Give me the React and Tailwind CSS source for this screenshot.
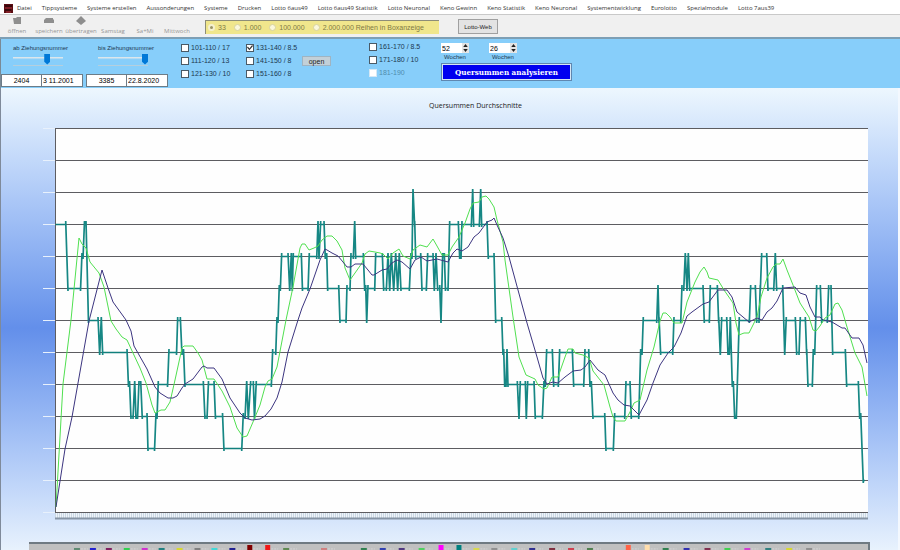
import { useState } from 'react'

const menu = [
  'Datei',
  'Tippsysteme',
  'Systeme erstellen',
  'Aussonderungen',
  'Systeme',
  'Drucken',
  'Lotto 6aus49',
  'Lotto 6aus49 Statistik',
  'Lotto Neuronal',
  'Keno Gewinn',
  'Keno Statistik',
  'Keno Neuronal',
  'Systementwicklung',
  'Eurolotto',
  'Spezialmodule',
  'Lotto 7aus39',
]

const toolbar = [
  { label: 'öffnen', icon: 'M1 2h3l1-1h4v7H2z' },
  { label: 'speichern', icon: 'M1 3l1-1h7v1l1 1v3H0V4z' },
  { label: 'übertragen', icon: 'M5 0l5 5-5 4-5-4z' },
  { label: 'Samstag' },
  { label: 'Sa+Mi' },
  { label: 'Mittwoch' },
]

const rows = ['33', '1.000', '100.000', '2.000.000 Reihen in Boxanzeige']

// [x, grid line], grid line 0 is the top of the plot
const steps = [
  [55.5, 3], [65.7, 3], [68, 5], [80.5, 5], [82, 4], [83, 4], [84.5, 3], [86, 3], [88.5, 6], [98, 6],
  [99.7, 7], [101.3, 6], [102.7, 7], [127, 7], [128.5, 8], [129.5, 8], [131, 9], [133, 9], [134.7, 8],
  [136, 9], [137.5, 9], [139, 8], [140.7, 8], [142.3, 9], [147, 9], [148, 10], [154.5, 10], [156, 9],
  [157, 9], [158.3, 8], [167.5, 8], [169, 7], [176.5, 7], [177.7, 6], [180.3, 6], [182, 7], [183.5, 7],
  [185, 8], [203.3, 8], [205, 9], [207, 9], [208.5, 8], [214, 8], [215.5, 9], [222.5, 9], [224, 10],
  [241.7, 10], [243.3, 9], [245, 9], [246.7, 8], [248.3, 9], [250.7, 8], [253.3, 8], [254.5, 9],
  [256.3, 8], [271.3, 8], [272.7, 7], [275.7, 7], [277, 6], [278, 6], [279.3, 5], [280.3, 5], [281.7, 4],
  [288, 4], [289.7, 5], [291.3, 4], [292.3, 5], [293.3, 4], [301.3, 4], [302.5, 5], [308, 5], [309.3, 4],
  [316.7, 4], [318, 3], [319, 4], [320.7, 3], [324, 3], [325.3, 4], [326.7, 4], [327.7, 5], [338.7, 5],
  [340, 6], [346, 6], [347, 5], [350, 5], [351, 4], [353.3, 4], [354.7, 3], [355.7, 4], [363.3, 4],
  [364.7, 5], [365.7, 5], [366.7, 6], [368, 5], [374.7, 5], [375.7, 4], [382.3, 4], [383.7, 5],
  [386.3, 5], [388, 4], [389.7, 5], [391.3, 4], [393.7, 5], [395.7, 4], [397.7, 5], [399.3, 4], [401, 5],
  [409.3, 5], [411, 4], [412, 4], [413, 2], [414.7, 3], [415.7, 4], [420.7, 4], [422, 5], [426.3, 5],
  [427.7, 4], [433, 4], [434.3, 5], [436, 4], [437.7, 5], [439.7, 5], [441, 6], [442.7, 4], [444.3, 4],
  [445.5, 5], [448, 5], [449.7, 3], [458.3, 3], [459.7, 4], [461, 4], [462, 3], [471.3, 3], [472.7, 2],
  [473.7, 3], [479.3, 3], [480.7, 2], [481.7, 3], [487, 3], [488.3, 4], [494, 4], [495.7, 6], [501.7, 6],
  [503, 7], [503.7, 7], [504.7, 8], [506, 8], [507, 7], [508, 8], [517.3, 8], [519, 9], [520.3, 8],
  [525.3, 8], [526.3, 9], [527.7, 8], [534, 8], [535.3, 9], [542.3, 9], [544, 8], [545.3, 8], [546.7, 7],
  [552.3, 7], [553.7, 8], [558.3, 8], [559.7, 7], [572.3, 7], [573.7, 8], [583.7, 8], [585, 7],
  [588.7, 7], [590, 8], [591.3, 8], [593, 9], [604.7, 9], [606, 10], [613.3, 10], [614.7, 9], [624.7, 9],
  [626, 8], [630, 8], [631.3, 9], [638.7, 9], [640.7, 7], [642, 7], [643.3, 6], [656.7, 6], [658, 5],
  [659, 6], [660.7, 7], [672.7, 7], [674, 6], [680.7, 6], [682, 5], [683.7, 5], [685.3, 4], [687, 5],
  [688.3, 4], [689.7, 5], [703, 5], [704.3, 6], [709.3, 6], [710.3, 5], [717.3, 5], [718.7, 6],
  [720.3, 7], [721.7, 6], [726.7, 6], [728, 7], [729.3, 7], [730.3, 6], [732.3, 8], [733.3, 8],
  [734.7, 9], [736.3, 9], [739.3, 6], [749.3, 6], [750.7, 5], [755.3, 5], [756.7, 6], [759, 6],
  [760.3, 5], [761.7, 4], [766.7, 4], [768, 5], [773.7, 5], [775.3, 4], [776.7, 5], [782.7, 5],
  [784.7, 7], [786.3, 6], [795.3, 6], [796.7, 7], [799, 7], [800.3, 6], [805.3, 6], [806.7, 7], [808, 8],
  [812.3, 8], [813.3, 7], [814.7, 7], [816.7, 5], [820.3, 5], [821.7, 6], [827.3, 6], [828.7, 5],
  [831, 5], [832.7, 7], [845.3, 7], [846.7, 8], [858.3, 8], [859.7, 9], [860.7, 9], [863.3, 11],
  [865, 11],
]

const average26 =
  '56,507 63,384 71,320 79,238 82,244 86,248 90,262 99,273 104,287 111,321 116,329 122,337 127,340 133,353 140,368 146,383 152,405 155,413 161,410 165,410 170,402 175,380 182,348 184,346 193,346 198,353 202,360 207,379 214,379 222,391 230,407 237,428 243,437 247,436 253,422 260,405 265,387 268,381 272,379 277,367 286,320 293,287 300,248 302,244 305,244 309,250 314,248 318,246 322,240 327,236 332,236 337,241 342,250 345,268 350,280 355,273 362,263 365,254 369,251 375,252 380,253 383,254 388,259 393,253 399,249 403,256 410,259 413,250 420,245 427,247 433,239 437,246 442,255 448,255 452,247 459,237 465,223 470,209 473,203 479,202 482,197 486,196 489,199 494,207 497,220 503,242 505,260 513,317 519,357 526,375 535,379 538,385 544,389 547,388 552,377 558,377 565,357 568,349 573,349 575,353 583,355 589,358 593,371 604,385 610,407 613,417 616,421 625,421 630,412 634,403 640,400 647,370 654,347 660,321 663,313 666,313 670,317 674,323 682,323 687,302 695,282 700,272 704,267 707,272 709,278 718,280 724,290 733,303 736,323 739,335 744,333 749,333 752,327 757,317 761,297 767,278 773,267 776,264 780,264 783,259 787,270 793,285 800,303 809,317 813,330 816,331 820,326 825,318 830,315 835,304 838,303 842,310 847,327 855,353 862,367 867,396'

const average52 =
  '56,507 65,449 72,417 89,321 102,270 108,288 113,302 126,320 131,331 134,346 147,369 155,387 160,393 168,398 173,398 177,396 182,388 185,384 193,379 202,367 204,366 207,368 214,368 222,379 230,398 240,413 245,418 252,420 260,419 265,416 271,409 277,398 282,382 288,352 298,320 302,308 310,289 320,260 325,249 327,250 332,253 338,256 343,262 347,267 351,267 355,264 363,264 368,270 372,275 374,275 382,270 387,269 392,263 397,260 402,262 410,269 415,260 421,257 427,261 437,259 448,262 453,253 457,249 462,251 468,247 474,237 479,233 487,222 492,220 494,218 497,225 503,238 509,257 518,290 527,323 537,357 543,378 547,384 553,382 558,383 565,377 573,371 581,370 585,367 590,360 598,370 605,375 613,393 618,400 624,405 630,406 639,415 647,400 653,383 660,365 668,353 674,347 681,333 687,316 692,312 703,304 709,302 718,290 727,290 732,297 737,312 743,317 749,322 757,318 762,320 767,312 772,308 777,301 783,288 795,287 800,293 806,295 810,307 815,317 820,317 823,320 832,322 842,328 845,328 852,338 859,338 863,345 867,363'

const legend = [
  [76, '#5f8a72'], [92, '#2020d0'], [108, '#802060'], [126, '#30d050'], [144, '#d030d0'],
  [161, '#208080'], [179, '#d8d830'], [197, '#808080'], [214, '#40d8d8'], [232, '#202090'],
  [249, '#800000', 1], [267, '#f01818', 1], [286, '#5f8a52'], [324, '#d08080'], [364, '#308050'],
  [383, '#3040b0'], [402, '#503880'], [422, '#50d060'], [441, '#ff00ff', 1], [459, '#008080', 1],
  [477, '#d8d850'], [495, '#909090'], [515, '#60d0d0'], [533, '#303090'], [553, '#803040'],
  [572, '#d04050'], [591, '#508050'], [629, '#ff6347', 1], [648, '#ffdead', 1], [667, '#308050'],
  [688, '#3030b0'], [709, '#803050'], [729, '#40d050'], [749, '#d040d0'], [770, '#308080'],
  [791, '#d8d830'], [811, '#909090'],
]

const gridY = (line) => 128 + line * 32

// a riser runs a little past both of its grid lines
function riser([x1, a], [x2, b]) {
  const over = b > a ? 3 : -3
  return `M${x1} ${gridY(a) - over}L${x2} ${gridY(b) + over}`
}

const flats = steps.slice(1).map((p, i) => (p[1] === steps[i][1] ? `M${steps[i][0]} ${gridY(p[1])}.5H${p[0]}` : '')).join('')
const risers = steps.slice(1).map((p, i) => (p[1] === steps[i][1] ? '' : riser(steps[i], p))).join('')

function Plot() {
  return (
    <svg viewBox="40 124 832 398" className="block w-full h-auto" role="img" aria-label="Quersummen Durchschnitte">
      <rect x="55" y="128" width="813" height="385" fill="#fefefe" />
      {Array.from({ length: 13 }, (_, i) => (
        <g key={i} shapeRendering="crispEdges">
          <path d={`M43 ${gridY(i)}.5h12`} stroke="#e8f1fc" />
          <path d={`M55 ${gridY(i)}.5h813`} stroke="#5d5d61" />
        </g>
      ))}
      <path d="M55.5 128v385" stroke="#5d5d61" />
      <path d="M55 515.5h813" stroke="#eef4fa" strokeWidth="5" />
      <path d="M55 515.5h813" stroke="#cbd8e4" strokeWidth="5" strokeDasharray="1 1" />
      <path d="M55 518.5h813" stroke="#8795a6" strokeWidth="2" />
      <g fill="none">
        <path d={flats} stroke="#117f7c" strokeWidth="1.4" />
        <path d={risers} stroke="#168784" strokeWidth="1.7" />
        <polyline points={average26} stroke="#50e050" />
        <polyline points={average52} stroke="#3c3580" />
      </g>
    </svg>
  )
}

function Legend() {
  return (
    <div className="mt-5 mx-7 border-t-2 border-r-2 border-[#6f7a82] bg-[#c0c0c0]">
      <svg viewBox="28 544 842 12" className="block w-full h-auto">
        {legend.map(([x, color, block]) => (
          <rect
            key={x}
            x={block ? x - 2 : x - 3}
            y={block ? 545 : 548}
            width={block ? 5 : 6}
            height={block ? 8 : 2}
            fill={color}
          />
        ))}
        {legend.map(([x]) => (
          <path key={x} d={`M${x + 4} 549h7`} stroke="#d4d4d4" strokeDasharray="2 1" />
        ))}
      </svg>
    </div>
  )
}

function DrawRange({ id, label, value, onChange, no, date }) {
  return (
    <div className="flex w-[82px] flex-col">
      <label htmlFor={id} className="pl-3 pt-1 text-[6px] leading-[10px] whitespace-nowrap">
        {label}
      </label>
      <input
        id={id}
        type="range"
        min="1"
        max="3385"
        value={value}
        onChange={(e) => onChange(+e.target.value)}
        className="ml-3 h-3 w-[50px] appearance-none bg-transparent bg-linear-to-b from-transparent from-35% via-[#e7eaea] via-35% to-transparent to-55% [&::-webkit-slider-thumb]:h-[11px] [&::-webkit-slider-thumb]:w-[6px] [&::-webkit-slider-thumb]:appearance-none [&::-webkit-slider-thumb]:bg-[#0078d7] [&::-webkit-slider-thumb]:[clip-path:polygon(0_0,100%_0,100%_75%,50%_100%,0_75%)]"
      />
      <div className="ml-3 h-px w-[50px] bg-[#b5cfdd]" />
      <div className="mt-2 flex border border-[#6d7c87] bg-white text-black">
        <input aria-label={`${label} Nummer`} defaultValue={no} className="h-[11px] w-10 border-r border-[#6d7c87] text-center" />
        <input aria-label={`${label} Datum`} defaultValue={date} className="h-[11px] min-w-0 flex-1 pl-px" />
      </div>
    </div>
  )
}

function Check({ label, ...props }) {
  return (
    <label className="flex h-[13px] items-center gap-[2px] whitespace-nowrap has-disabled:text-[#4f8cad]">
      <input
        type="checkbox"
        className="size-[8px] appearance-none border border-[#4a5a66] bg-white disabled:border-[#d5e8f5] checked:before:block checked:before:size-full checked:before:bg-[#333] checked:before:[clip-path:polygon(0_50%,15%_35%,40%_65%,85%_10%,100%_25%,40%_95%)]"
        {...props}
      />
      {label}
    </label>
  )
}

function Weeks({ id, initial }) {
  const [value, setValue] = useState(initial)
  return (
    <div className="flex w-7 flex-col items-center">
      <div className="flex h-[10px] w-full bg-white">
        <input
          id={id}
          value={value}
          onChange={(e) => setValue(Number(e.target.value) || 0)}
          className="min-w-0 flex-1 pl-px text-black"
        />
        <div className="flex w-[7px] flex-col bg-[#e4e4e4] text-[#222]">
          <button aria-label="mehr" onClick={() => setValue(value + 1)} className="flex h-[5px] items-center justify-center">
            <svg viewBox="0 0 6 4" className="h-[3px] w-[5px]" fill="currentColor"><path d="M3 0l3 4H0z" /></svg>
          </button>
          <button aria-label="weniger" onClick={() => setValue(value - 1)} className="flex h-[5px] items-center justify-center">
            <svg viewBox="0 0 6 4" className="h-[3px] w-[5px]" fill="currentColor"><path d="M3 4l3-4H0z" /></svg>
          </button>
        </div>
      </div>
      <label htmlFor={id} className="text-[6px] leading-[9px]">Wochen</label>
    </div>
  )
}

export default function App() {
  const [from, setFrom] = useState(2404)
  const [to, setTo] = useState(3385)

  return (
    <div className="flex h-screen flex-col overflow-hidden bg-white font-['Liberation_Sans',sans-serif] text-[7px] leading-none text-[#1c3850]">
      <nav className="flex h-[15px] shrink-0 items-center gap-1 border-b border-[#c9c9c9] pt-[2px] pl-1 font-['Open_Sans',sans-serif] text-[6px] text-[#333] whitespace-nowrap">
        <svg viewBox="0 0 9 9" className="size-[9px] shrink-0">
          <path d="M0 0h9v9H0z" fill="#5a0d12" />
          <path d="M1 2h7M1 6h6" stroke="#1c0507" />
          <path d="M1 4h7M2 8h5" stroke="#a8323a" />
        </svg>
        <div className="flex gap-[10px]">
          {menu.map((item) => (
            <a key={item} href="#">{item}</a>
          ))}
        </div>
      </nav>

      <div className="flex h-[24px] shrink-0 items-center border-b-2 border-[#7d9fb5] bg-[#f0f0f0] pl-px">
        {toolbar.map(({ label, icon }) => (
          <button key={label} className="flex h-full w-8 flex-col items-center justify-between py-px font-['Open_Sans',sans-serif] text-[6px] text-[#969696]">
            <svg viewBox="0 0 10 9" className="h-[9px] w-[10px]" fill="#8e8e8e">
              {icon && <path d={icon} />}
            </svg>
            <span className="leading-[10px]">{label}</span>
          </button>
        ))}
        <fieldset className="ml-3 mt-px flex h-[14px] w-[234px] items-center gap-2 border-t border-l border-[#8d8d78] bg-[#f0e68c] pt-px pl-[2px] text-[#7f7a45] whitespace-nowrap">
          {rows.map((row, i) => (
            <label key={row} className="flex items-center gap-[3px]">
              <input
                type="radio"
                name="rows"
                defaultChecked={i === 0}
                className="size-[7px] appearance-none rounded-full border border-[#d8d3a0] bg-[#fbf8dc] checked:border-2 checked:border-[#f5f1cf] checked:bg-[#999468]"
              />
              {row}
            </label>
          ))}
        </fieldset>
        <button className="ml-[19px] mt-px h-[15px] w-10 border border-[#a0a0a0] bg-[#e3e3e3] text-[6px] text-[#222]">Lotto-Web</button>
      </div>

      <div className="flex h-[49px] shrink-0 border-l border-[#7a8a96] bg-[#87cefa]">
        <DrawRange id="from" label="ab Ziehungsnummer" value={from} onChange={setFrom} no="2404" date="3 11.2001" />
        <div className="ml-[3px] flex">
          <DrawRange id="to" label="bis Ziehungsnummer" value={to} onChange={setTo} no="3385" date="22.8.2020" />
        </div>
        <div className="ml-[13px] w-[65px] pt-[2px]">
          <Check label="101-110 / 17" />
          <Check label="111-120 / 13" />
          <Check label="121-130 / 10" />
        </div>
        <div className="w-14 pt-[2px]">
          <Check label="131-140 / 8.5" defaultChecked />
          <Check label="141-150 / 8" />
          <Check label="151-160 / 8" />
        </div>
        <button className="mt-[17px] h-[10px] w-[29px] border border-[#9fb4c2] bg-[#c3d0d8] text-[#222]">open</button>
        <div className="ml-[38px] w-[72px] pt-px">
          <Check label="161-170 / 8.5" />
          <Check label="171-180 / 10" />
          <Check label="181-190" disabled />
        </div>
        <div className="pt-1">
          <div className="flex gap-5">
            <Weeks id="weeks-long" initial={52} />
            <Weeks id="weeks-short" initial={26} />
          </div>
          <button className="mt-px h-[18px] w-[131px] border border-[#5f87b0] bg-[#0000f0] font-['DejaVu_Serif_Condensed','DejaVu_Serif',serif] text-[8px] font-bold text-white outline outline-[#d5e6f5] -outline-offset-2 whitespace-nowrap">
            Quersummen analysieren
          </button>
        </div>
      </div>

      <main className="flex-1 overflow-hidden border-r-2 border-l border-r-[#f3f8fe] border-l-[#7f8a9a] bg-linear-to-b from-[#edf7fe] via-[#638fea] via-52% to-[#e8f2fd]">
        <h1 className="pl-13 text-center font-['Open_Sans',sans-serif] text-[7px] leading-9 text-[#222]">Quersummen Durchschnitte</h1>
        <div className="pr-[26px] pl-[39px]">
          <Plot />
        </div>
        <Legend />
      </main>
    </div>
  )
}
